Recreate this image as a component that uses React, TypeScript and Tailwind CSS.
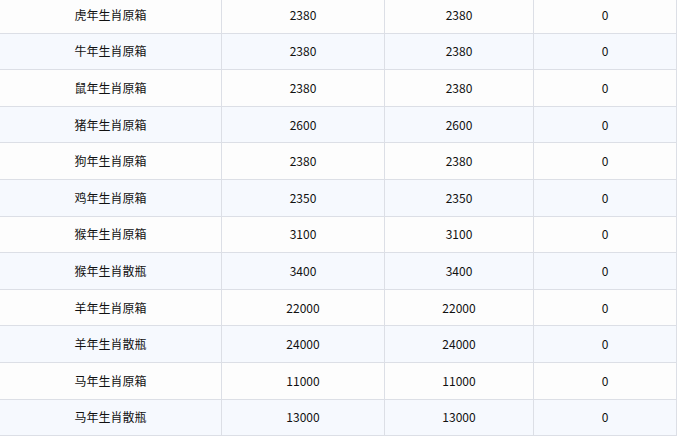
const rows: [string, string, string, string][] = [
  ["虎年生肖原箱", "2380", "2380", "0"],
  ["牛年生肖原箱", "2380", "2380", "0"],
  ["鼠年生肖原箱", "2380", "2380", "0"],
  ["猪年生肖原箱", "2600", "2600", "0"],
  ["狗年生肖原箱", "2380", "2380", "0"],
  ["鸡年生肖原箱", "2350", "2350", "0"],
  ["猴年生肖原箱", "3100", "3100", "0"],
  ["猴年生肖散瓶", "3400", "3400", "0"],
  ["羊年生肖原箱", "22000", "22000", "0"],
  ["羊年生肖散瓶", "24000", "24000", "0"],
  ["马年生肖原箱", "11000", "11000", "0"],
  ["马年生肖散瓶", "13000", "13000", "0"],
];

export default function App() {
  return (
    <div
      className="h-[436px] w-[677px] overflow-hidden bg-white text-[12px] text-[#111]"
      style={{ fontFamily: '"Noto Sans CJK SC", "Noto Sans", sans-serif' }}
    >
      <div className="-mt-[3px]">
        {rows.map((r, i) => (
          <div
            key={i}
            className={`grid h-[36.6px] grid-cols-[222px_163px_149px_143px] border-b border-[#dcdfe6] ${
              i % 2 === 1 ? "bg-[#f6f9fe]" : "bg-[#fdfdfd]"
            }`}
          >
            {r.map((c, j) => (
              <div
                key={j}
                className="flex items-center justify-center border-r border-[#dcdfe6]"
              >
                {c}
              </div>
            ))}
          </div>
        ))}
      </div>
    </div>
  );
}
